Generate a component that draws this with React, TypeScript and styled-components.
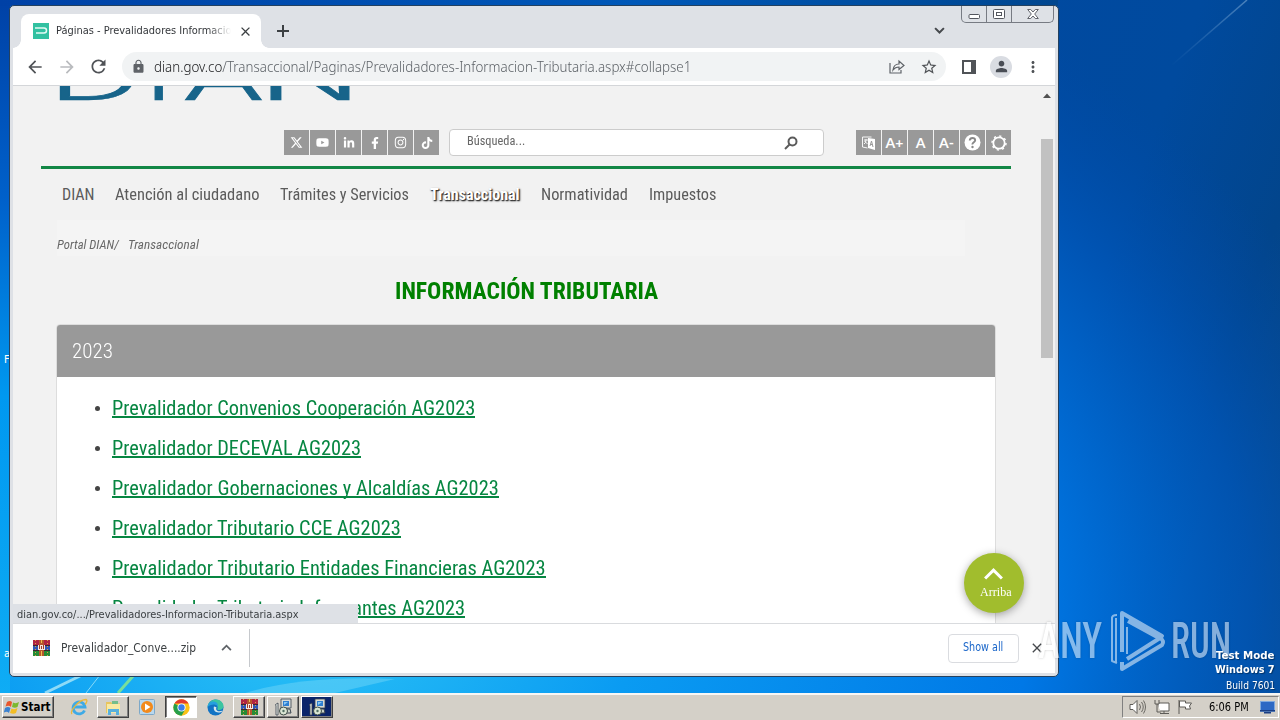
import * as React from 'react'
import styled, { createGlobalStyle, css } from 'styled-components'
import { FaFacebookF, FaLinkedinIn, FaInstagram, FaTiktok, FaYoutube } from 'react-icons/fa'
import { FaXTwitter } from 'react-icons/fa6'
import {
  MdArrowBack,
  MdArrowForward,
  MdClose,
  MdLock,
  MdMoreVert,
  MdPerson,
  MdRefresh,
  MdStarOutline
} from 'react-icons/md'

const colors = {
  chrome: '#dee1e6',
  page: '#f2f2f2',
  grey: '#999999',
  green: '#068641',
  title: '#008000',
  icon: '#5f6368',
  face: '#d4d0c8'
}

const fonts = {
  ui: '"DejaVu Sans Condensed", "DejaVu Sans", "Noto Sans", sans-serif',
  web: '"Roboto Condensed", Roboto, sans-serif'
}

const GlobalStyle = createGlobalStyle`
  * {
    box-sizing: border-box;
  }
  html, body {
    margin: 0;
    padding: 0;
    overflow: hidden;
  }
  svg {
    display: block;
    flex: none;
  }
`

/* Text squeezed or stretched to a known width */
const FitBox = styled.span<{ $width: number }>`
  display: inline-block;
  flex: none;
  width: ${p => p.$width}px;
  white-space: nowrap;
`
const FitText = styled.span`
  display: inline-block;
  transform-origin: 0 50%;
`
const Fit = ({ width, children }: { width: number; children: React.ReactNode }) => {
  const ref = React.useRef<HTMLSpanElement>(null)
  const [scale, setScale] = React.useState(1)
  React.useLayoutEffect(() => {
    if (ref.current) {
      setScale(width / ref.current.offsetWidth)
    }
  }, [width])
  return (
    <FitBox $width={width}>
      <FitText ref={ref} style={{ transform: `scaleX(${scale})` }}>
        {children}
      </FitText>
    </FitBox>
  )
}

const Desktop = styled.div`
  position: relative;
  width: 1280px;
  height: 720px;
  overflow: hidden;
  display: flex;
  flex-direction: column;
  justify-content: flex-end;
  font-family: ${fonts.ui};
  background: linear-gradient(110deg, #0046ad 0%, #004a9e 78%, #02458c 88%, #0d4a84 100%);
`
const Wallpaper = styled.svg`
  position: absolute;
  left: 0;
  top: 0;
`

const Window = styled.div`
  position: absolute;
  left: 9px;
  top: 5px;
  width: 1050px;
  height: 672px;
  border: 1px solid #24415f;
  border-radius: 5px;
  padding: 0 3px;
  background: ${colors.chrome};
  overflow: hidden;
  display: flex;
  flex-direction: column;
`

const TabStrip = styled.div`
  height: 42px;
  flex: none;
  display: flex;
  align-items: flex-end;
  padding-left: 8px;
`
const Tab = styled.div`
  position: relative;
  width: 240px;
  height: 34px;
  padding: 0 9px 0 12px;
  border-radius: 8px 8px 0 0;
  background: #fff;
  display: flex;
  align-items: center;
  &::before,
  &::after {
    content: '';
    position: absolute;
    bottom: 0;
    width: 8px;
    height: 8px;
  }
  &::before {
    left: -8px;
    background: radial-gradient(circle at 0 0, transparent 7.5px, #fff 8px);
  }
  &::after {
    right: -8px;
    background: radial-gradient(circle at 100% 0, transparent 7.5px, #fff 8px);
  }
`
const TabTitle = styled.div`
  width: 175px;
  flex: none;
  margin: 0 7px 0 7px;
  overflow: hidden;
  font-size: 11px;
  line-height: 16px;
  color: #33363a;
  mask-image: linear-gradient(90deg, #000 87%, transparent 100%);
`
const NewTab = styled.div`
  width: 44px;
  height: 34px;
  display: flex;
  align-items: center;
  justify-content: center;
`
const TabSearch = styled.div`
  width: 22px;
  height: 34px;
  margin-left: 623px;
  display: flex;
  align-items: center;
  justify-content: center;
`
const Captions = styled.div`
  align-self: flex-start;
  height: 17px;
  display: flex;
  border: 1px solid #777b83;
  border-top: 0;
  border-radius: 0 0 5px 5px;
  margin-left: 11px;
`
const Caption = styled.div<{ $width: number }>`
  width: ${p => p.$width}px;
  display: flex;
  align-items: center;
  justify-content: center;
  & + & {
    border-left: 1px solid #777b83;
  }
`

const Toolbar = styled.div`
  height: 38px;
  flex: none;
  display: flex;
  align-items: center;
  background: #fff;
  border-bottom: 1px solid #d4d6d9;
  color: ${colors.icon};
`
const ToolButton = styled.div<{ $width?: number; $faded?: boolean }>`
  width: ${p => p.$width || 32}px;
  flex: none;
  display: flex;
  justify-content: center;
  color: ${p => (p.$faded ? '#b9bbbe' : '#505357')};
`
const Omnibox = styled.div`
  width: 824px;
  height: 29px;
  flex: none;
  margin: 0 6px 0 3px;
  border-radius: 15px;
  background: #f1f3f4;
  display: flex;
  align-items: center;
  padding-left: 9px;
`
const Url = styled.div`
  width: 741px;
  flex: none;
  padding-left: 8px;
  font-family: 'Noto Sans', sans-serif;
  font-weight: 300;
  font-size: 14px;
  color: #5c6166;
  b {
    font-weight: 300;
    color: #17181a;
  }
`
const Avatar = styled.div`
  width: 22px;
  height: 22px;
  border-radius: 50%;
  background: #d9dce2;
  color: #494d55;
  display: flex;
  align-items: center;
  justify-content: center;
`

const Viewport = styled.div`
  position: relative;
  height: 537px;
  flex: none;
  display: flex;
  background: ${colors.page};
  overflow: hidden;
`
const Page = styled.div`
  width: 1027px;
  padding: 0 29px 0 28px;
  font-family: ${fonts.web};
  font-stretch: 75%;
`
const Logo = styled.div`
  height: 15px;
  overflow: hidden;
  display: flex;
  align-items: flex-end;
  padding: 0 0 1px 7px;
  font-family: Inter, sans-serif;
  font-stretch: normal;
  font-weight: 300;
  font-size: 60px;
  line-height: 44px;
  color: #17648a;
`
const LogoLetter = styled.div<{ $gap: number }>`
  margin: 0 ${p => p.$gap}px 0 0;
  height: 44px;
  -webkit-text-stroke: 0.6px #17648a;
`
const Tools = styled.div`
  display: flex;
  align-items: center;
  height: 27px;
  margin-top: 28px;
  padding-left: 243px;
`
const Squares = styled.div`
  display: flex;
  gap: 1px;
`
const Square = styled.div`
  width: 25px;
  height: 25px;
  display: flex;
  align-items: center;
  justify-content: center;
  background: ${colors.grey};
  color: #fff;
  font: 700 14px Lato, sans-serif;
`
const Search = styled.div`
  width: 375px;
  height: 27px;
  margin: 0 32px 0 10px;
  padding: 0 25px 4px 17px;
  border: 1px solid #ccc;
  border-radius: 4px;
  background: #fff;
  display: flex;
  align-items: center;
  justify-content: space-between;
  font-size: 13px;
  color: #666;
  svg {
    margin-top: 5px;
  }
`
const Nav = styled.nav`
  display: flex;
  gap: 21px;
  height: 54px;
  margin-top: 10px;
  padding: 16px 0 0 21px;
  border-top: 3px solid #128745;
  font-size: 16px;
  line-height: 20px;
  color: #5b5b5b;
`
const NavItem = styled.div<{ $active?: boolean }>`
  ${p =>
    p.$active &&
    css`
      color: #fff;
      font-weight: 700;
      text-shadow: 1px 1px 1px #333, 1px 1px 2px #333;
    `}
`
const Breadcrumb = styled.div`
  display: flex;
  align-items: center;
  gap: 9px;
  width: 908px;
  height: 36px;
  margin-left: 16px;
  padding-top: 13px;
  background: #f4f4f4;
  font-size: 12.5px;
  font-style: italic;
  color: #686868;
`
const Title = styled.h1`
  margin: 20px 0 18px;
  height: 30px;
  padding-left: 354px;
  font-size: 24px;
  line-height: 30px;
  font-weight: 700;
  color: ${colors.title};
`
const Panel = styled.div`
  width: 940px;
  height: 400px;
  margin-left: 15px;
  border: 1px solid #ddd;
  border-radius: 4px 4px 0 0;
  background: #fff;
`
const PanelHeading = styled.div`
  height: 52px;
  padding-left: 15px;
  display: flex;
  align-items: center;
  border-radius: 3px 3px 0 0;
  background: ${colors.grey};
  color: #fff;
  font-size: 20px;
  font-weight: 300;
`
const List = styled.ul`
  margin: 11px 0 0;
  padding: 0 0 0 38px;
  list-style: none;
`
const Item = styled.li`
  display: flex;
  align-items: center;
  height: 40px;
  font-size: 20px;
  &::before {
    content: '';
    width: 5px;
    height: 5px;
    margin-right: 12px;
    border-radius: 50%;
    background: #444;
  }
`
const FileLink = styled.a`
  height: 20px;
  line-height: 21px;
  border-bottom: 2px solid ${colors.green};
  color: ${colors.green};
`
const Scrollbar = styled.div`
  width: 15px;
  padding: 7px 2px 0 1px;
  background: #f1f1f1;
  display: flex;
  flex-direction: column;
  align-items: center;
`
const Thumb = styled.div`
  width: 12px;
  height: 219px;
  margin-top: 41px;
  background: #c1c1c1;
`
const ToTop = styled.div`
  position: absolute;
  left: 951px;
  top: 467px;
  width: 60px;
  height: 60px;
  padding: 14px 0 0 3px;
  border-radius: 50%;
  background: #a1bd2d;
  box-shadow: 0 2px 9px rgba(0, 0, 0, 0.35);
  display: flex;
  flex-direction: column;
  align-items: center;
  gap: 3px;
  color: #fff;
  font: 12.5px/16px 'Liberation Serif', serif;
  svg {
    margin-right: 5px;
  }
`
const StatusBubble = styled.div`
  position: absolute;
  left: 0;
  bottom: 0;
  width: 345px;
  height: 19px;
  padding-left: 4px;
  background: ${colors.chrome};
  font-size: 11px;
  line-height: 21px;
  color: #3c4043;
`

const Shelf = styled.div`
  height: 50px;
  flex: none;
  display: flex;
  align-items: center;
  padding: 0 0 1px 20px;
  border-top: 1px solid #d9dbde;
  background: #fff;
  font-size: 12px;
  color: #3c4043;
`
const Download = styled.div`
  display: flex;
  align-items: center;
  width: 217px;
  height: 38px;
  padding-bottom: 1px;
  border-right: 1px solid #c6c9cd;
`
const DownloadName = styled.div`
  margin: 0 25px 0 11px;
`
const ShowAll = styled.div`
  display: flex;
  align-items: center;
  justify-content: center;
  width: 71px;
  height: 29px;
  margin: 0 10px 0 698px;
  padding: 0 2px 2px 0;
  border: 1px solid #dadce0;
  border-radius: 4px;
  font-size: 11.5px;
  color: #1a66c9;
`

const DesktopLabel = styled.div<{ $top: number }>`
  position: absolute;
  left: 4px;
  top: ${p => p.$top}px;
  width: 6px;
  overflow: hidden;
  font-size: 11px;
  line-height: 13px;
  color: #fff;
`
const BuildInfo = styled.div`
  position: absolute;
  right: 5px;
  top: 649px;
  display: flex;
  flex-direction: column;
  align-items: flex-end;
  font-size: 11px;
  line-height: 14px;
  color: #fff;
`
const BuildLine = styled.div<{ $bold?: boolean }>`
  display: flex;
  align-items: center;
  height: ${p => (p.$bold ? 14 : 18)}px;
  font-weight: ${p => (p.$bold ? 700 : 400)};
  text-shadow: 1px 1px 1px rgba(0, 0, 0, 0.4);
`
const Watermark = styled.div`
  position: absolute;
  left: 1038px;
  top: 610px;
  height: 62px;
  display: flex;
  align-items: center;
  font-family: ${fonts.web};
  font-stretch: 75%;
  font-size: 50px;
  font-weight: 500;
  line-height: 62px;
  color: #fff;
  opacity: 0.52;
  text-shadow: 0 0 3px rgba(0, 0, 0, 0.4);
  svg {
    margin: 0 5px 0 8px;
  }
`

const Taskbar = styled.div`
  position: relative;
  height: 27px;
  flex: none;
  display: flex;
  align-items: center;
  padding: 0 0 1px 2px;
  border-top: 2px solid #f7f6f4;
  background: ${colors.face};
`
const StartButton = styled.div`
  display: flex;
  align-items: center;
  gap: 1px;
  width: 52px;
  height: 22px;
  margin-right: 9px;
  padding-left: 1px;
  border: 1px solid;
  border-color: #fff #404040 #404040 #fff;
  box-shadow: inset -1px -1px #808080;
  font-size: 11.5px;
  font-weight: 700;
  color: #000;
`
const Task = styled.div<{ $look?: 'raised' | 'pressed' | 'flash' }>`
  width: 32px;
  height: 22px;
  margin-right: 2px;
  display: flex;
  align-items: center;
  justify-content: center;
  ${p =>
    p.$look &&
    css`
      border: 1px solid;
      border-color: ${p.$look === 'pressed' ? '#404040 #fff #fff #404040' : '#fff #404040 #404040 #fff'};
      box-shadow: ${p.$look === 'pressed' ? 'inset 1px 1px #808080' : 'inset -1px -1px #808080'};
      background: ${p.$look === 'pressed' ? '#fff' : p.$look === 'flash' ? '#0a246a' : colors.face};
    `}
`
const Tray = styled.div`
  display: flex;
  align-items: center;
  width: 157px;
  height: 22px;
  margin: 0 1px 0 auto;
  padding: 0 2px 0 6px;
  border: 1px solid;
  border-color: #808080 #fff #fff #808080;
  font-size: 11.5px;
  color: #000;
`
const Clock = styled.div`
  margin: 0 11px 0 16px;
`

const Chevron = ({ up, size = 10, width = 2, color = '#46494d' }: any) => (
  <svg width={size} height={size * 0.65} viewBox="0 0 20 13" fill="none" stroke={color} strokeWidth={width * (20 / size)}>
    <path d={up ? 'M2 11 10 3l8 8' : 'M2 2l8 8 8-8'} />
  </svg>
)

const Favicon = () => (
  <svg width="16" height="16" viewBox="0 0 16 16">
    <rect width="16" height="16" fill="#32c1a1" />
    <path d="M2 5h9q2.500 0 2.500 2.500T11 10H3" fill="none" stroke="#e5fbf5" strokeWidth="1.500" />
  </svg>
)

const RarIcon = () => (
  <svg width="17" height="16" viewBox="0 0 17 16">
    <path d="M0 0h17v5H0z" fill="#b02443" />
    <path d="M0 5.500h17v4.500H0z" fill="#3157b5" />
    <path d="M0 11h17v5H0z" fill="#278b35" />
    <path d="M0 5.500h17M0 10.500h17" stroke="#3a2530" />
    <path d="M2.500 0v16M14.500 0v16" stroke="#e0a040" strokeWidth="1" strokeDasharray="1 2" />
    <path d="M6 0h5v16H6z" fill="#b5562d" />
    <path d="M5 5h7v5H5z" fill="#f6e9de" />
    <path d="M6.500 5v4M8.500 6v3M10.500 5v4" stroke="#a03b2b" />
    <path d="M8.500 0v3M8.500 11v5" stroke="#f0bd4f" />
  </svg>
)

const ChromeIcon = () => (
  <svg width="17" height="17" viewBox="0 0 48 48">
    <circle cx="24" cy="24" r="23" fill="#fbc116" />
    <path d="M4.100 12.500A23 23 0 0 0 24 47l10-17-10-6z" fill="#269f4b" />
    <path d="M4.100 12.500A23 23 0 0 1 43.900 12.500H24z" fill="#e33b2e" />
    <circle cx="24" cy="24" r="11.500" fill="#fff" />
    <circle cx="24" cy="24" r="9" fill="#3b7de9" />
  </svg>
)

const EdgeIcon = () => (
  <svg width="17" height="17" viewBox="0 0 17 17">
    <circle cx="8.500" cy="8.500" r="8" fill="#1273c4" />
    <path d="M.5 8C1 3 5 .5 9 .5c4.500 0 7.500 3.500 7.500 6.500 0 2.500-2 4-4.500 4-1.500 0-2-.7-1.500-1.500C11.500 7 9 5 6.500 5 3.500 5 1 6.500.500 8z" fill="#3cc5a0" />
    <path d="M.5 8C1 4 4 2 7 2.500c3 .5 4.500 3 4 5C9 4.500 3 5 .500 8z" fill="#25a0df" />
    <path d="M7 7.500c-1 3 1 6 4.500 6 2 0 3.500-.7 4.500-1.500-1-.5-2 .2-3.500.2-3 0-4-2-3-4z" fill="#d4e6ec" />
  </svg>
)

const IeIcon = () => (
  <svg width="18" height="18" viewBox="0 0 18 18" fill="none">
    <path d="M14.500 12.500A6 6 0 1 1 15 9H4" stroke="#3eaae6" strokeWidth="2.800" />
    <path d="M2 16C-.5 13 9 1.500 16 1.500c2 .5 0 4-.8 5" stroke="#e9b83b" strokeWidth="1.300" />
  </svg>
)

const FolderIcon = () => (
  <svg width="17" height="17" viewBox="0 0 17 17">
    <path d="M1 3h5l1.500 1.500H15V14H1z" fill="#e7c55f" />
    <path d="M2 5h13v9H2z" fill="#f8e9a3" />
    <path d="M3 16v-6h11v6h-3v-3H6v3z" fill="#58b0dd" />
    <path d="M7 2h6v3H7z" fill="#73bd8b" />
  </svg>
)

const PlayerIcon = () => (
  <svg width="16" height="16" viewBox="0 0 16 16">
    <rect x=".5" y=".5" width="15" height="15" rx="1" fill="#b9d8ee" stroke="#7da8c8" />
    <circle cx="8" cy="8" r="6" fill="#f28a1c" />
    <path d="M6 4.500 11.500 8 6 11.500z" fill="#fff" />
  </svg>
)

const InstallerIcon = () => (
  <svg width="18" height="18" viewBox="0 0 18 18">
    <path d="M7 1h10v9H7z" fill="#d8dad6" stroke="#39434f" strokeWidth=".8" />
    <path d="M9 3h6v5H9z" fill="#2f7fd0" />
    <path d="M10 4l4 0-4 3z" fill="#8cc9f3" />
    <path d="M11 11h5l1 4h-6z" fill="#ccd4c8" stroke="#39434f" />
    <path d="M1.500 6.500 4 5v12H2V8z" fill="#e4e8e0" stroke="#39434f" strokeWidth=".8" />
    <circle cx="9.500" cy="13" r="4" fill="#dbe6d4" stroke="#3c4b45" />
    <circle cx="9.500" cy="13" r="1.200" fill="#527063" />
  </svg>
)

const StartFlag = () => (
  <svg width="16" height="15" viewBox="0 0 16 15">
    <path d="M3 2q3-2 5 0L7 7Q5 5 1.500 6.500z" fill="#e9562b" />
    <path d="M9 2.500q3 1.500 6-.5L13.500 7Q11 8.500 8 7z" fill="#7cb82f" />
    <path d="M1 8q3-2 5.500 0L5 13Q3 11-.200 12.500z" fill="#3b82d0" />
    <path d="M7.500 8.500q3 1.500 6-.500L12 13q-2.500 1.500-6 0z" fill="#f3bd24" />
  </svg>
)

const links: [string, number][] = [
  ['Prevalidador Convenios Cooperación AG2023', 363],
  ['Prevalidador DECEVAL AG2023', 249],
  ['Prevalidador Gobernaciones y Alcaldías AG2023', 387],
  ['Prevalidador Tributario CCE AG2023', 289],
  ['Prevalidador Tributario Entidades Financieras AG2023', 434],
  ['Prevalidador Tributario Informantes AG2023', 353]
]

const menu: [string, number][] = [
  ['DIAN', 32],
  ['Atención al ciudadano', 144],
  ['Trámites y Servicios', 129],
  ['Transaccional', 90],
  ['Normatividad', 87],
  ['Impuestos', 67]
]

const Background = () => (
  <Wallpaper width="1280" height="720" viewBox="0 0 1280 720">
    <defs>
      <radialGradient id="glow" gradientUnits="userSpaceOnUse" cx="300" cy="620" r="1120" gradientTransform="translate(300 620) scale(1 .7) translate(-300 -620)">
        <stop offset="0" stopColor="#2cc4f6" />
        <stop offset=".3" stopColor="#0a9bf2" />
        <stop offset=".65" stopColor="#0078e6" />
        <stop offset=".85" stopColor="#0056b8" stopOpacity=".8" />
        <stop offset="1" stopColor="#004aa8" stopOpacity="0" />
      </radialGradient>
      <linearGradient id="edge" x2="0" y2="1">
        <stop offset="0" stopColor="#0041a6" />
        <stop offset=".28" stopColor="#0061cb" />
        <stop offset=".55" stopColor="#0098f0" />
        <stop offset="1" stopColor="#10aef5" />
      </linearGradient>
      <linearGradient id="top" x2="1" y2="0">
        <stop offset="0" stopColor="#0041a6" />
        <stop offset=".6" stopColor="#0058b8" />
        <stop offset="1" stopColor="#00468f" />
      </linearGradient>
      <linearGradient id="ray" gradientUnits="userSpaceOnUse" x1="1170" y1="65" x2="1250" y2="0">
        <stop offset="0" stopColor="#3a78bc" stopOpacity="0" />
        <stop offset="1" stopColor="#4d84bd" />
      </linearGradient>
    </defs>
    <path d="M0 0h1280v720H0z" fill="url(#glow)" />
    <path d="M0 0h10v720H0z" fill="url(#edge)" />
    <path d="M0 0h1058v6H0z" fill="url(#top)" />
    <path d="M1172 65 1247 0" stroke="url(#ray)" strokeWidth="1.500" />
    <path d="M45 693 82 675" stroke="#b8edf9" strokeWidth="3" opacity=".75" />
    <path d="M86 693l14-18" stroke="#a4e6f8" opacity=".8" />
    <path d="M118 693l16-18" stroke="#79df9b" strokeWidth="3" />
    <path d="M245 693q60-18 150-14l-60 14z" fill="#83ddf7" opacity=".4" />
  </Wallpaper>
)

const Browser = () => (
  <Window>
    <TabStrip>
      <Tab>
        <Favicon />
        <TabTitle>
          <Fit width={182}>Páginas - Prevalidadores Informacion</Fit>
        </TabTitle>
        <MdClose size={15} color="#3c4043" />
      </Tab>
      <NewTab>
        <svg width="12" height="12" viewBox="0 0 12 12" stroke="#3c4043" strokeWidth="2">
          <path d="M6 0v12M0 6h12" />
        </svg>
      </NewTab>
      <TabSearch>
        <Chevron size={11} width={2} />
      </TabSearch>
      <Captions>
        <Caption $width={24}>
          <svg width="13" height="10" viewBox="0 0 13 10">
            <rect x="1" y="5.500" width="10.500" height="4" rx="1" fill="#fff" stroke="#53565e" />
          </svg>
        </Caption>
        <Caption $width={25}>
          <svg width="12" height="10" viewBox="0 0 12 10" fill="#fff" stroke="#53565e">
            <rect x=".5" y=".5" width="11" height="9" rx="1" />
            <rect x="3.500" y="3.500" width="5" height="3" />
          </svg>
        </Caption>
        <Caption $width={42}>
          <svg width="12" height="10" viewBox="0 0 12 10">
            <path d="M.7.5h3L6 3 8.300.5h3L7.700 5l3.600 4.500h-3L6 7 3.700 9.500h-3L4.300 5z" fill="#fff" stroke="#53565e" strokeWidth=".9" />
          </svg>
        </Caption>
      </Captions>
    </TabStrip>
    <Toolbar>
      <ToolButton $width={43}>
        <MdArrowBack size={20} />
      </ToolButton>
      <ToolButton $width={22} $faded>
        <MdArrowForward size={20} />
      </ToolButton>
      <ToolButton $width={41}>
        <MdRefresh size={21} />
      </ToolButton>
      <Omnibox>
        <MdLock size={15} />
        <Url>
          <Fit width={537}>
            <b>dian.gov.co</b>/Transaccional/Paginas/Prevalidadores-Informacion-Tributaria.aspx#collapse1
          </Fit>
        </Url>
        <ToolButton $width={20}>
          <svg width="16" height="15" viewBox="0 0 16 15" fill="none" stroke="#5f6368" strokeWidth="1.200">
            <path d="M1 4v10h11v-3" />
            <path d="M4 11c.5-4 3-6 6-6V2l5 4.500-5 4V8C7.500 8 5.500 9 4 11z" />
          </svg>
        </ToolButton>
        <ToolButton $width={44}>
          <MdStarOutline size={18} />
        </ToolButton>
      </Omnibox>
      <ToolButton $width={33}>
        <svg width="14" height="14" viewBox="0 0 14 14">
          <path d="M1 1h12v12H1z" fill="none" stroke="#505357" strokeWidth="2" />
          <path d="M9 0h5v14H9z" fill="#505357" />
        </svg>
      </ToolButton>
      <ToolButton $width={32}>
        <Avatar>
          <MdPerson size={17} />
        </Avatar>
      </ToolButton>
      <ToolButton $width={32}>
        <MdMoreVert size={18} />
      </ToolButton>
    </Toolbar>
    <Viewport>
      <Page>
        <Logo>
          <LogoLetter $gap={4}>
            <Fit width={93}>D</Fit>
          </LogoLetter>
          <LogoLetter $gap={9}>
            <Fit width={28}>I</Fit>
          </LogoLetter>
          <LogoLetter $gap={-6}>
            <Fit width={82}>A</Fit>
          </LogoLetter>
          <LogoLetter $gap={0}>
            <Fit width={105}>N</Fit>
          </LogoLetter>
        </Logo>
        <Tools>
          <Squares>
            <Square><FaXTwitter size={13} /></Square>
            <Square><FaYoutube size={13} /></Square>
            <Square><FaLinkedinIn size={12} /></Square>
            <Square><FaFacebookF size={12} /></Square>
            <Square><FaInstagram size={13} /></Square>
            <Square><FaTiktok size={12} /></Square>
          </Squares>
          <Search>
            <Fit width={58}>Búsqueda...</Fit>
            <svg width="14" height="14" viewBox="0 0 14 14" fill="none" stroke="#5b5b5b" strokeWidth="2">
              <circle cx="8.500" cy="5.500" r="4" />
              <path d="M5.500 8.500 1 13" />
            </svg>
          </Search>
          <Squares>
            <Square>
              <svg width="13" height="14" viewBox="0 0 13 14">
                <path d="M6 2l7 1v11l-7-2z" fill="#fff" />
                <path d="M8 10l1.500-5L11 11M8.500 8.500h2" stroke="#999" fill="none" />
                <path d="M.5 1h9M.5 1v10l5 1M2 4h4M4 3v1q0 3-2 4M2.500 5l3 3" stroke="#fff" fill="none" strokeWidth=".9" />
              </svg>
            </Square>
            <Square>A+</Square>
            <Square>A</Square>
            <Square>A-</Square>
            <Square>
              <svg width="17" height="17" viewBox="0 0 17 17">
                <circle cx="8.500" cy="8.500" r="8" fill="#fff" />
                <path d="M5.700 6.500Q6 4 8.500 4t2.700 2.300q0 1.200-1.500 2T8.500 10.500" stroke="#888" strokeWidth="1.900" fill="none" />
                <circle cx="8.500" cy="13" r="1.200" fill="#888" />
              </svg>
            </Square>
            <Square>
              <svg width="16" height="16" viewBox="0 0 16 16" fill="none" stroke="#fff">
                <circle cx="8" cy="8" r="5.700" strokeWidth="1.800" />
                <circle cx="8" cy="8" r="7" strokeWidth="1.500" strokeDasharray="2.200 3.300" />
              </svg>
            </Square>
          </Squares>
        </Tools>
        <Nav>
          {menu.map(([label, width]) => (
            <NavItem key={label} $active={label === 'Transaccional'}>
              <Fit width={width}>{label}</Fit>
            </NavItem>
          ))}
        </Nav>
        <Breadcrumb>
          <Fit width={62}>Portal DIAN/</Fit>
          <Fit width={71}>Transaccional</Fit>
        </Breadcrumb>
        <Title>
          <Fit width={263}>INFORMACIÓN TRIBUTARIA</Fit>
        </Title>
        <Panel>
          <PanelHeading>
            <Fit width={41}>2023</Fit>
          </PanelHeading>
          <List>
            {links.map(([label, width]) => (
              <Item key={label}>
                <FileLink>
                  <Fit width={width}>{label}</Fit>
                </FileLink>
              </Item>
            ))}
          </List>
        </Panel>
      </Page>
      <Scrollbar>
        <svg width="8" height="5" viewBox="0 0 8 5">
          <path d="M0 5 4 .500 8 5z" fill="#505050" />
        </svg>
        <Thumb />
      </Scrollbar>
      <ToTop>
        <Chevron up size={21} width={3} color="#fff" />
        <Fit width={32}>Arriba</Fit>
      </ToTop>
      <StatusBubble>
        <Fit width={282}>dian.gov.co/.../Prevalidadores-Informacion-Tributaria.aspx</Fit>
      </StatusBubble>
    </Viewport>
    <Shelf>
      <Download>
        <RarIcon />
        <DownloadName>
          <Fit width={135}>Prevalidador_Conve....zip</Fit>
        </DownloadName>
        <Chevron up size={11} width={1.8} color="#5f6368" />
      </Download>
      <ShowAll>
        <Fit width={40}>Show all</Fit>
      </ShowAll>
      <MdClose size={16} color="#46494d" />
    </Shelf>
  </Window>
)

const App = () => (
  <Desktop>
    <GlobalStyle />
    <Background />
    <DesktopLabel $top={353}>F</DesktopLabel>
    <DesktopLabel $top={647}>a</DesktopLabel>
    <Browser />
    <Watermark>
      <Fit width={64}>ANY</Fit>
      <svg width="56" height="62" viewBox="0 0 56 62" fill="none" stroke="#fff" strokeWidth="4" strokeLinejoin="round">
        <path d="M6 8v44M2 8q0-3 5-3M2 7v44l5 2" strokeWidth="2" />
        <path d="M12 42V3l40 23-3 2-31-17" />
        <path d="M17 17v27" strokeWidth="2" />
        <path d="M12 52v7l40-24q3-4-2-7L17 49" />
      </svg>
      <Fit width={60}>RUN</Fit>
    </Watermark>
    <BuildInfo>
      <BuildLine $bold>
        <Fit width={59}>Test Mode</Fit>
      </BuildLine>
      <BuildLine $bold>
        <Fit width={60}>Windows 7</Fit>
      </BuildLine>
      <BuildLine>
        <Fit width={49}>Build 7601</Fit>
      </BuildLine>
    </BuildInfo>
    <Taskbar>
      <StartButton>
        <StartFlag />
        <Fit width={29}>Start</Fit>
      </StartButton>
      <Task><IeIcon /></Task>
      <Task $look="raised"><FolderIcon /></Task>
      <Task><PlayerIcon /></Task>
      <Task $look="pressed"><ChromeIcon /></Task>
      <Task><EdgeIcon /></Task>
      <Task $look="raised"><RarIcon /></Task>
      <Task $look="raised"><InstallerIcon /></Task>
      <Task $look="flash"><InstallerIcon /></Task>
      <Tray>
        <svg width="64" height="18" viewBox="0 0 64 18" fill="#fff" stroke="#5d5b57">
          <path d="M1 6.500h3l4-4v13l-4-4H1z" />
          <path d="M10.500 6q2 3 0 6M12.500 4q3.500 5 0 10M14.500 2.500q4 6.500 0 13" fill="none" strokeWidth=".9" />
          <path d="M29 5h11v8H29zM31 15.500h9M35 13v2" />
          <path d="M26 2v4h4V2M28 6v8h4" fill="#d4d0c8" />
          <path d="M50 2v14" />
          <path d="M50.500 3h6v2h6l-2 3 1 3h-5V9h-6z" />
        </svg>
        <Clock>
          <Fit width={40}>6:06 PM</Fit>
        </Clock>
        <svg width="15" height="13" viewBox="0 0 15 13">
          <rect x=".5" y=".5" width="14" height="10" fill="#2d69c4" stroke="#7fa9dd" />
          <path d="M0 9h15v1.500H0zM4 11h7v1.500H4z" fill="#1b3e83" />
        </svg>
      </Tray>
    </Taskbar>
  </Desktop>
)

export default App
